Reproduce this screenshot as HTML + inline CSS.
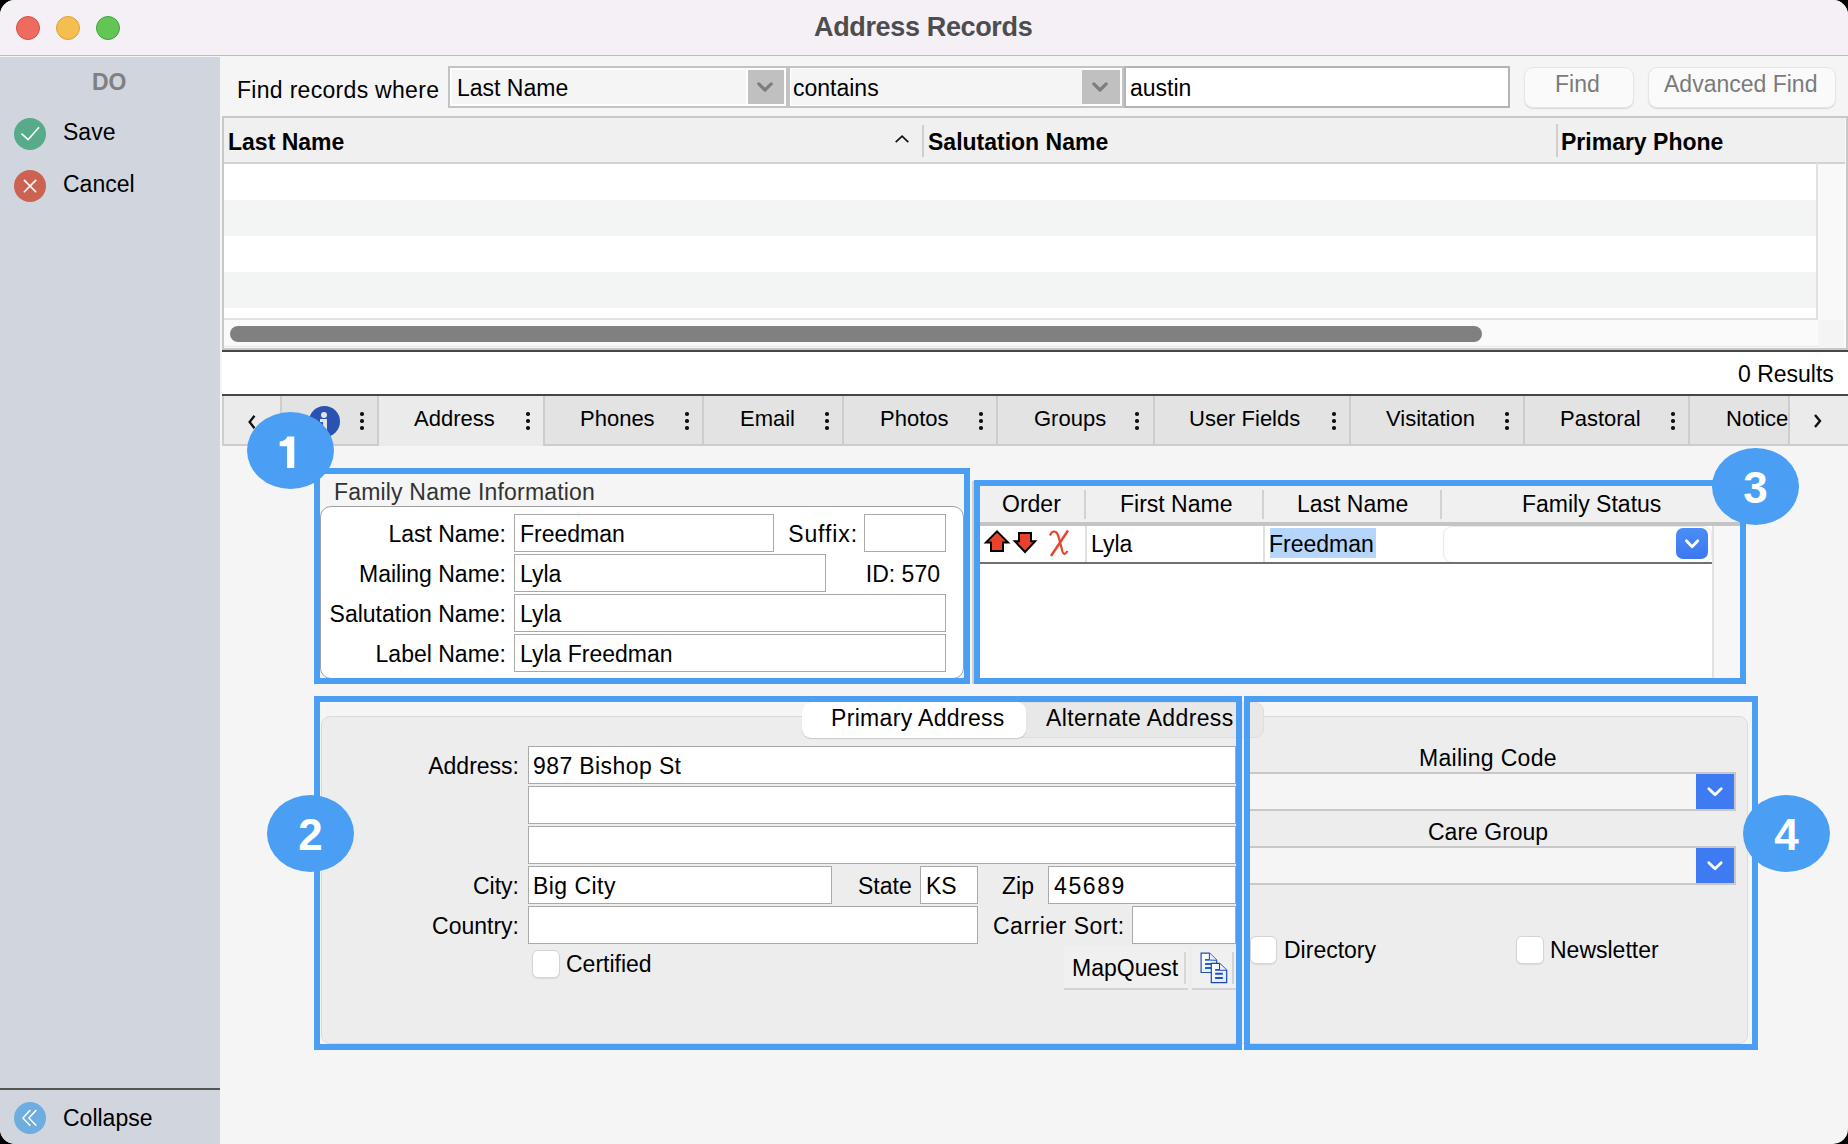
<!DOCTYPE html>
<html><head><meta charset="utf-8">
<style>
*{box-sizing:border-box;margin:0;padding:0}
html,body{width:1848px;height:1144px;overflow:hidden;background:#000}
body{font-family:"Liberation Sans",sans-serif;color:#000;position:relative}
.a{position:absolute}
.t{position:absolute;white-space:nowrap;font-size:23px;line-height:23px}
#win{position:absolute;left:0;top:0;width:1848px;height:1144px;border-radius:15px;overflow:hidden;background:#f5f5f5}
#title{position:absolute;left:0;top:0;width:1848px;height:56px;background:#f4f0f6;border-bottom:1px solid #b8bcc6}
.tl{position:absolute;top:16px;width:24px;height:24px;border-radius:50%}
#side{position:absolute;left:0;top:57px;width:220px;height:1087px;background:#d0d5de}
.ic{position:absolute;width:32px;height:32px;border-radius:50%}
.b1{border:2px solid #c4c4c4}
.fld{position:absolute;background:#fff;border:1px solid #a9a9a9}
.tab{position:absolute;top:396px;height:49px;background:#e3e3e3;border-right:2px solid #cfcfcf;border-bottom:2px solid #cfcfcf}
.tab .t{font-size:22px}
.dot{position:absolute;left:0.3px;width:3.5px;height:3.5px;border-radius:50%;background:#111}
.keb{position:absolute;top:13px;width:4px}
.keb i{display:block;width:4px;height:4px;background:#111;border-radius:50%;margin-bottom:5px}
.hl{position:absolute;border:6px solid #4a9ff5}
.badge{position:absolute;width:88px;height:78px;border-radius:50%;background:#4a9ff5;color:#fff;font-weight:bold;font-size:44px;line-height:80px;text-align:center}
</style></head><body>
<div id="win">
  <!-- title bar -->
  <div id="title">
    <div class="tl" style="left:16px;background:#ee6b60;border:1px solid #d64f45"></div>
    <div class="tl" style="left:56px;background:#f5bf4f;border:1px solid #d9a33c"></div>
    <div class="tl" style="left:96px;background:#62c554;border:1px solid #3fa436"></div>
    <div class="t" style="left:814px;top:14px;font-size:27px;line-height:27px;font-weight:bold;color:#4d4d50;letter-spacing:-0.35px">Address Records</div>
  </div>

  <!-- sidebar -->
  <div id="side">
    <div class="t" style="left:92px;top:14px;font-weight:bold;font-size:23px;color:#808080">DO</div>
    <div class="ic" style="left:14px;top:61px;background:#57ab8b">
      <svg width="32" height="32" viewBox="0 0 32 32" style="position:absolute;left:0;top:0"><path d="M7.5 15.6 L14.1 21.7 L25 9.3" fill="none" stroke="#fff" stroke-width="1.6"/></svg>
    </div>
    <div class="t" style="left:63px;top:64px">Save</div>
    <div class="ic" style="left:14px;top:113px;background:#cc6352">
      <svg width="32" height="32" viewBox="0 0 32 32" style="position:absolute;left:0;top:0"><path d="M9.9 9.9 L22.2 22.2 M22.2 9.9 L9.9 22.2" fill="none" stroke="#fff" stroke-width="1.6"/></svg>
    </div>
    <div class="t" style="left:63px;top:116px">Cancel</div>
    <div class="a" style="left:0;top:1031px;width:220px;height:2px;background:#555"></div>
    <div class="ic" style="left:14px;top:1045px;background:#6eaddf">
      <svg width="32" height="32" viewBox="0 0 32 32" style="position:absolute;left:0;top:0"><path d="M15.9 8.6 L8.9 15.9 L15.9 23.3 M21.9 8.6 L14.9 15.9 L21.9 23.3" fill="none" stroke="#fff" stroke-width="1.5" stroke-linecap="round"/></svg>
    </div>
    <div class="t" style="left:63px;top:1050px">Collapse</div>
  </div>

  <!-- main -->

  <!-- search bar -->
  <div class="t" style="left:237px;top:79px;letter-spacing:0.3px">Find records where</div>
  <div class="a" style="left:448px;top:66px;width:676px;height:42px;background:#c3c3c3"></div>
  <div class="a" style="left:450px;top:68px;width:336px;height:38px;background:#fdfdfd"></div>
  <div class="a" style="left:452px;top:70px;width:294px;height:34px;background:#f5f5f5"></div>
  <div class="a" style="left:748px;top:70px;width:36px;height:34px;background:#c0c0c0"></div>
  <svg class="a" style="left:748px;top:70px" width="36" height="34"><path d="M10.8 13.9 L17 20 L23.2 13.9" fill="none" stroke="#7d7d7d" stroke-width="3.2" stroke-linecap="round" stroke-linejoin="round"/></svg>
  <div class="t" style="left:457px;top:77px">Last Name</div>
  <div class="a" style="left:790px;top:68px;width:332px;height:38px;background:#fdfdfd"></div>
  <div class="a" style="left:791px;top:69px;width:291px;height:36px;background:#f5f5f5"></div>
  <div class="a" style="left:1082px;top:70px;width:38px;height:34px;background:#c0c0c0"></div>
  <svg class="a" style="left:1082px;top:70px" width="38" height="34"><path d="M11.8 13.9 L18 20 L24.2 13.9" fill="none" stroke="#7d7d7d" stroke-width="3.2" stroke-linecap="round" stroke-linejoin="round"/></svg>
  <div class="t" style="left:793px;top:77px">contains</div>
  <div class="a" style="left:1124px;top:66px;width:386px;height:42px;border:2px solid #b4b4b4;background:#fff"></div>
  <div class="t" style="left:1130px;top:77px">austin</div>
  <div class="a" style="left:1524px;top:67px;width:110px;height:41px;border-radius:9px;background:#fafafa;border:1px solid #e6e6e6;box-shadow:0 1px 1px rgba(0,0,0,0.12)"></div>
  <div class="t" style="left:1555px;top:73px;color:#7a7a7a">Find</div>
  <div class="a" style="left:1648px;top:67px;width:188px;height:41px;border-radius:9px;background:#fafafa;border:1px solid #e6e6e6;box-shadow:0 1px 1px rgba(0,0,0,0.12)"></div>
  <div class="t" style="left:1664px;top:73px;color:#7a7a7a">Advanced Find</div>

  <!-- results table -->
  <div class="a" style="left:222px;top:116px;width:1626px;height:234px;border:2px solid #c8c8c8;border-right:2px solid #c8c8c8;background:#fafafa"></div>
  <div class="a" style="left:224px;top:118px;width:1621px;height:46px;background:#f0f0f0;border-bottom:2px solid #d2d2d2"></div>
  <div class="t" style="left:228px;top:131px;font-weight:bold">Last Name</div>
  <svg class="a" style="left:892px;top:132px" width="20" height="14"><path d="M3.7 10.2 L10.1 4.1 L16.3 10.2" fill="none" stroke="#111" stroke-width="1.7"/></svg>
  <div class="a" style="left:922px;top:125px;width:2px;height:32px;background:#cfcfcf"></div>
  <div class="t" style="left:928px;top:131px;font-weight:bold">Salutation Name</div>
  <div class="a" style="left:1556px;top:124px;width:2px;height:33px;background:#cfcfcf"></div>
  <div class="t" style="left:1561px;top:131px;font-weight:bold">Primary Phone</div>
  <div class="a" style="left:224px;top:164px;width:1592px;height:36px;background:#fff"></div>
  <div class="a" style="left:224px;top:200px;width:1592px;height:36px;background:#f3f4f4"></div>
  <div class="a" style="left:224px;top:236px;width:1592px;height:36px;background:#fff"></div>
  <div class="a" style="left:224px;top:272px;width:1592px;height:36px;background:#f3f4f4"></div>
  <div class="a" style="left:224px;top:308px;width:1592px;height:10px;background:#fff"></div>
  <div class="a" style="left:224px;top:318px;width:1593px;height:2px;background:#e2e2e2"></div>
  <div class="a" style="left:1816px;top:163px;width:2px;height:157px;background:#e2e2e2"></div>
  <div class="a" style="left:1818px;top:164px;width:26px;height:156px;background:#f9f9f9"></div>
  <div class="a" style="left:1818px;top:320px;width:26px;height:28px;background:#f4f4f4"></div>
  <div class="a" style="left:224px;top:346px;width:1594px;height:1px;background:#e6e6e6"></div>
  <div class="a" style="left:230px;top:326px;width:1252px;height:16px;border-radius:8px;background:#808080"></div>
  <div class="a" style="left:222px;top:350px;width:1626px;height:2px;background:#474747"></div>

  <!-- results count -->
  <div class="a" style="left:222px;top:352px;width:1626px;height:42px;background:#fff"></div>
  <div class="t" style="left:1738px;top:363px">0 Results</div>
  <div class="a" style="left:222px;top:394px;width:1626px;height:2px;background:#474747"></div>

  <!-- tabs -->
  <div class="a" style="left:222px;top:396px;width:1626px;height:50px;background:#e3e3e3;border-bottom:2px solid #cdcdcd"></div>
  <div class="a" style="left:222px;top:396px;width:58px;height:50px;background:#ebebeb;border-left:2px solid #cdcdcd;border-bottom:2px solid #cdcdcd"></div>
  <div class="a" style="left:280px;top:396px;width:97px;height:50px;background:#e3e3e3;border-left:2px solid #cdcdcd;border-bottom:2px solid #cdcdcd"></div>
  <div class="a" style="left:377px;top:396px;width:166px;height:50px;background:#ebebeb;border-left:2px solid #cdcdcd;border-bottom:none"></div>
  <div class="a" style="left:543px;top:396px;width:159px;height:50px;background:#e3e3e3;border-left:2px solid #cdcdcd;border-bottom:2px solid #cdcdcd"></div>
  <div class="a" style="left:702px;top:396px;width:140px;height:50px;background:#e3e3e3;border-left:2px solid #cdcdcd;border-bottom:2px solid #cdcdcd"></div>
  <div class="a" style="left:842px;top:396px;width:154px;height:50px;background:#e3e3e3;border-left:2px solid #cdcdcd;border-bottom:2px solid #cdcdcd"></div>
  <div class="a" style="left:996px;top:396px;width:157px;height:50px;background:#e3e3e3;border-left:2px solid #cdcdcd;border-bottom:2px solid #cdcdcd"></div>
  <div class="a" style="left:1153px;top:396px;width:196px;height:50px;background:#e3e3e3;border-left:2px solid #cdcdcd;border-bottom:2px solid #cdcdcd"></div>
  <div class="a" style="left:1349px;top:396px;width:174px;height:50px;background:#e3e3e3;border-left:2px solid #cdcdcd;border-bottom:2px solid #cdcdcd"></div>
  <div class="a" style="left:1523px;top:396px;width:165px;height:50px;background:#e3e3e3;border-left:2px solid #cdcdcd;border-bottom:2px solid #cdcdcd"></div>
  <div class="a" style="left:1688px;top:396px;width:100px;height:50px;background:#e3e3e3;border-left:2px solid #cdcdcd;border-bottom:2px solid #cdcdcd"></div>
  <div class="a" style="left:1788px;top:396px;width:60px;height:50px;background:#ebebeb;border-left:2px solid #cdcdcd;border-bottom:2px solid #cdcdcd"></div>
  <div class="t" style="left:414px;top:408px;font-size:22px;line-height:22px">Address</div>
  <div class="t" style="left:580px;top:408px;font-size:22px;line-height:22px">Phones</div>
  <div class="t" style="left:740px;top:408px;font-size:22px;line-height:22px">Email</div>
  <div class="t" style="left:880px;top:408px;font-size:22px;line-height:22px">Photos</div>
  <div class="t" style="left:1034px;top:408px;font-size:22px;line-height:22px">Groups</div>
  <div class="t" style="left:1189px;top:408px;font-size:22px;line-height:22px">User Fields</div>
  <div class="t" style="left:1386px;top:408px;font-size:22px;line-height:22px">Visitation</div>
  <div class="t" style="left:1560px;top:408px;font-size:22px;line-height:22px">Pastoral</div>
  <div class="a" style="left:1689px;top:396px;width:100px;height:48px;overflow:hidden"><div class="t" style="left:37px;top:12px;font-size:22px;line-height:22px">Notice</div></div>
  <div class="a" style="left:360px;top:412px;width:4px;height:22px"><i class="dot" style="top:0"></i><i class="dot" style="top:7px"></i><i class="dot" style="top:14px"></i></div>
  <div class="a" style="left:526px;top:412px;width:4px;height:22px"><i class="dot" style="top:0"></i><i class="dot" style="top:7px"></i><i class="dot" style="top:14px"></i></div>
  <div class="a" style="left:685px;top:412px;width:4px;height:22px"><i class="dot" style="top:0"></i><i class="dot" style="top:7px"></i><i class="dot" style="top:14px"></i></div>
  <div class="a" style="left:825px;top:412px;width:4px;height:22px"><i class="dot" style="top:0"></i><i class="dot" style="top:7px"></i><i class="dot" style="top:14px"></i></div>
  <div class="a" style="left:979px;top:412px;width:4px;height:22px"><i class="dot" style="top:0"></i><i class="dot" style="top:7px"></i><i class="dot" style="top:14px"></i></div>
  <div class="a" style="left:1135px;top:412px;width:4px;height:22px"><i class="dot" style="top:0"></i><i class="dot" style="top:7px"></i><i class="dot" style="top:14px"></i></div>
  <div class="a" style="left:1332px;top:412px;width:4px;height:22px"><i class="dot" style="top:0"></i><i class="dot" style="top:7px"></i><i class="dot" style="top:14px"></i></div>
  <div class="a" style="left:1505px;top:412px;width:4px;height:22px"><i class="dot" style="top:0"></i><i class="dot" style="top:7px"></i><i class="dot" style="top:14px"></i></div>
  <div class="a" style="left:1671px;top:412px;width:4px;height:22px"><i class="dot" style="top:0"></i><i class="dot" style="top:7px"></i><i class="dot" style="top:14px"></i></div>
  <svg class="a" style="left:244px;top:410px" width="16" height="22"><path d="M10.5 5.8 L5.6 12 L10.5 18.2" fill="none" stroke="#111" stroke-width="2.3"/></svg>
  <svg class="a" style="left:1809px;top:410px" width="16" height="22"><path d="M6 5 L11 11 L6 17" fill="none" stroke="#111" stroke-width="2.4"/></svg>
  <div class="a" style="left:309px;top:406px;width:31px;height:31px;border-radius:50%;background:#2a52b0"></div>
  <div class="a" style="left:321px;top:412px;width:6px;height:6px;border-radius:50%;background:#e3e3e3"></div>
  <div class="a" style="left:323px;top:419px;width:4px;height:13px;background:#e3e3e3"></div>
  <div class="a" style="left:320px;top:419px;width:4px;height:3px;background:#e3e3e3"></div>

  <!-- box 1: family name info -->
  <div class="a" style="left:320px;top:474px;width:644px;height:204px;background:#f5f5f5"></div>
  <div class="t" style="left:334px;top:481px;color:#333;letter-spacing:0.18px">Family Name Information</div>
  <div class="a" style="left:320px;top:506px;width:644px;height:173px;background:#fff;border:1px solid #a0a0a0;border-radius:11px"></div>
  <div class="t" style="right:1342px;top:523px">Last Name:</div>
  <div class="t" style="right:1342px;top:563px">Mailing Name:</div>
  <div class="t" style="right:1342px;top:603px">Salutation Name:</div>
  <div class="t" style="right:1342px;top:643px">Label Name:</div>
  <div class="fld" style="left:514px;top:514px;width:260px;height:38px"></div>
  <div class="fld" style="left:514px;top:554px;width:312px;height:38px"></div>
  <div class="fld" style="left:514px;top:594px;width:432px;height:38px"></div>
  <div class="fld" style="left:514px;top:634px;width:432px;height:38px"></div>
  <div class="fld" style="left:864px;top:514px;width:82px;height:38px"></div>
  <div class="t" style="left:520px;top:523px">Freedman</div>
  <div class="t" style="left:520px;top:563px">Lyla</div>
  <div class="t" style="left:520px;top:603px">Lyla</div>
  <div class="t" style="left:520px;top:643px">Lyla Freedman</div>
  <div class="t" style="right:990px;top:523px;letter-spacing:0.9px">Suffix:</div>
  <div class="t" style="right:908px;top:563px">ID: 570</div>
  <div class="hl" style="left:314px;top:468px;width:656px;height:216px"></div>

  <!-- box 3: members table -->
  <div class="a" style="left:972px;top:481px;width:2px;height:203px;background:#cfcfcf"></div>
  <div class="a" style="left:980px;top:486px;width:760px;height:36px;background:#f0f0f0"></div>
  <div class="a" style="left:980px;top:522px;width:760px;height:4px;background:#c4c4c4"></div>
  <div class="a" style="left:980px;top:526px;width:732px;height:152px;background:#fff"></div>
  <div class="a" style="left:1712px;top:526px;width:28px;height:152px;background:#f7f7f7;border-left:2px solid #e2e2e2"></div>
  <div class="a" style="left:1084px;top:490px;width:2px;height:29px;background:#d2d2d2"></div>
  <div class="a" style="left:1262px;top:490px;width:2px;height:29px;background:#d2d2d2"></div>
  <div class="a" style="left:1440px;top:490px;width:2px;height:29px;background:#d2d2d2"></div>
  <div class="t" style="left:1002px;top:493px">Order</div>
  <div class="t" style="left:1120px;top:493px">First Name</div>
  <div class="t" style="left:1297px;top:493px">Last Name</div>
  <div class="t" style="left:1522px;top:493px">Family Status</div>
  <div class="a" style="left:1085px;top:526px;width:2px;height:36px;background:#e0e0e0"></div>
  <div class="a" style="left:1263px;top:526px;width:2px;height:36px;background:#e0e0e0"></div>
  <div class="a" style="left:1443px;top:526px;width:269px;height:37px;background:#fff;border:1px solid #e9e9e9;border-radius:9px"></div>
  <div class="a" style="left:980px;top:562px;width:732px;height:2px;background:#707070"></div>
  <div class="a" style="left:1270px;top:528px;width:106px;height:30px;background:#b5d5fb"></div>
  <div class="t" style="left:1091px;top:533px">Lyla</div>
  <div class="t" style="left:1269px;top:533px">Freedman</div>
  <div class="a" style="left:1676px;top:528px;width:32px;height:31px;border-radius:7px;background:linear-gradient(#4a8ef7,#3b77f0)"></div>
  <svg class="a" style="left:1676px;top:528px" width="32" height="31"><path d="M10.4 12.8 L16.1 18.7 L21.8 12.8" fill="none" stroke="#fff" stroke-width="2.8" stroke-linecap="round" stroke-linejoin="round"/></svg>
  <svg class="a" style="left:978px;top:524px" width="100" height="40">
    <path d="M19 6 L32.5 19.6 L26 19.6 L26 28 L12 28 L12 19.6 L5.5 19.6 Z" fill="#000"/><path d="M19 8.8 L27.8 17.6 L24 17.6 L24 26 L14 26 L14 17.6 L10.2 17.6 Z" fill="#e8432a"/>
    <path d="M40 8 L54 8 L54 16.2 L59.5 16.2 L47 29.6 L34.5 16.2 L40 16.2 Z" fill="#000"/><path d="M42 10 L52 10 L52 18.2 L54.8 18.2 L47 26.6 L39.2 18.2 L42 18.2 Z" fill="#e8432a"/>
  </svg>
  <svg class="a" style="left:1045px;top:526px" width="28" height="34">
    <path d="M5 9.5 Q7.5 3.5 11.5 6.5 Q13.5 9 15.5 18 L17.5 25.5 Q19 30.5 22.5 25" fill="none" stroke="#e8432a" stroke-width="2.2"/>
    <path d="M23 4.5 L6 30" fill="none" stroke="#e8432a" stroke-width="2.4"/>
  </svg>
  <div class="hl" style="left:974px;top:480px;width:772px;height:204px"></div>

  <!-- box 2 + 4 shared panel -->
  <div class="a" style="left:321px;top:716px;width:1427px;height:328px;background:#ededed;border:1px solid #dadada;border-radius:9px"></div>
  <div class="a" style="left:802px;top:702px;width:462px;height:36px;background:#e8e8e8;border:1px solid #dedede;border-radius:9px"></div>
  <div class="a" style="left:802px;top:702px;width:224px;height:36px;background:#fff;border-radius:9px;box-shadow:0 1px 1px rgba(0,0,0,0.15)"></div>
  <div class="t" style="left:831px;top:707px;letter-spacing:0.33px">Primary Address</div>
  <div class="t" style="left:1046px;top:707px;letter-spacing:0.35px">Alternate Address</div>

  <div class="t" style="right:1329px;top:755px">Address:</div>
  <div class="fld" style="left:528px;top:746px;width:708px;height:38px"></div>
  <div class="fld" style="left:528px;top:786px;width:708px;height:38px"></div>
  <div class="fld" style="left:528px;top:826px;width:708px;height:38px"></div>
  <div class="t" style="left:533px;top:755px;letter-spacing:0.4px">987 Bishop St</div>
  <div class="t" style="right:1329px;top:875px">City:</div>
  <div class="fld" style="left:528px;top:866px;width:304px;height:38px"></div>
  <div class="t" style="left:533px;top:875px;letter-spacing:0.45px">Big City</div>
  <div class="t" style="left:858px;top:875px">State</div>
  <div class="fld" style="left:920px;top:866px;width:58px;height:38px"></div>
  <div class="t" style="left:926px;top:875px">KS</div>
  <div class="t" style="left:1002px;top:875px">Zip</div>
  <div class="fld" style="left:1048px;top:866px;width:188px;height:38px"></div>
  <div class="t" style="left:1054px;top:875px;letter-spacing:1.6px">45689</div>
  <div class="t" style="right:1329px;top:915px">Country:</div>
  <div class="fld" style="left:528px;top:906px;width:450px;height:38px"></div>
  <div class="t" style="left:993px;top:915px;letter-spacing:0.5px">Carrier Sort:</div>
  <div class="fld" style="left:1132px;top:906px;width:104px;height:38px"></div>
  <div class="a" style="left:532px;top:950px;width:28px;height:28px;background:#fff;border:1px solid #d4d4d4;border-radius:6px;box-shadow:0 1px 1px rgba(0,0,0,0.08)"></div>
  <div class="t" style="left:566px;top:953px">Certified</div>
  <div class="a" style="left:1064px;top:946px;width:124px;height:42px;background:#f0f0f0"></div>
  <div class="a" style="left:1192px;top:946px;width:44px;height:42px;background:#f0f0f0"></div>
  <div class="a" style="left:1064px;top:988px;width:124px;height:2px;background:#d3d3d3"></div>
  <div class="a" style="left:1192px;top:988px;width:44px;height:2px;background:#d3d3d3"></div>
  <div class="a" style="left:1184px;top:952px;width:2px;height:32px;background:#d6d6d6"></div>
  <div class="a" style="left:1232px;top:952px;width:2px;height:32px;background:#d3d3d3"></div>
  <div class="t" style="left:1072px;top:957px">MapQuest</div>
  <svg class="a" style="left:1198px;top:950px" width="32" height="36">
    <defs><linearGradient id="pg" x1="0" y1="0" x2="1" y2="1"><stop offset="0" stop-color="#ffffff"/><stop offset="1" stop-color="#dce8fa"/></linearGradient></defs>
    <path d="M3.1 3.1 L11.4 3.1 L18.7 10.3 L18.7 22.5 L3.1 22.5 Z" fill="url(#pg)" stroke="#1f4fb5" stroke-width="1.2"/>
    <path d="M11.4 3.1 L11.4 10.1 L18.7 10.3" fill="#e6eefb" stroke="#1f4fb5" stroke-width="1"/>
    <path d="M7 9.9 L11.2 9.9 M7 14 L13.5 14 M7 18 L13.5 18" stroke="#2563c8" stroke-width="1.9"/>
    <path d="M13.3 13.4 L21.5 13.4 L28.7 20.3 L28.7 32.6 L13.3 32.6 Z" fill="url(#pg)" stroke="#1d47ad" stroke-width="1.2"/>
    <path d="M21.5 13.4 L21.5 20.3 L28.7 20.3" fill="#e6eefb" stroke="#1d47ad" stroke-width="1"/>
    <path d="M17.1 19.9 L21.5 19.9 M17.1 23.8 L24.8 23.8 M17.1 28 L24.8 28" stroke="#1f52bd" stroke-width="1.9"/>
  </svg>
  <div class="hl" style="left:314px;top:696px;width:928px;height:354px"></div>

  <!-- box 4 -->
  <div class="t" style="left:1419px;top:747px;letter-spacing:0.3px">Mailing Code</div>
  <div class="a" style="left:1250px;top:772px;width:486px;height:39px;background:#f5f5f5;border:2px solid #c8c8c8;border-left:none"></div>
  <div class="a" style="left:1696px;top:774px;width:38px;height:35px;background:#3e7bf2"></div>
  <svg class="a" style="left:1696px;top:774px" width="38" height="35"><path d="M12.8 14.8 L19 20.7 L25.2 14.8" fill="none" stroke="#fff" stroke-width="2.8" stroke-linecap="round" stroke-linejoin="round"/></svg>
  <div class="t" style="left:1428px;top:821px">Care Group</div>
  <div class="a" style="left:1250px;top:846px;width:486px;height:39px;background:#f5f5f5;border:2px solid #c8c8c8;border-left:none"></div>
  <div class="a" style="left:1696px;top:848px;width:38px;height:35px;background:#3e7bf2"></div>
  <svg class="a" style="left:1696px;top:848px" width="38" height="35"><path d="M12.8 14.8 L19 20.7 L25.2 14.8" fill="none" stroke="#fff" stroke-width="2.8" stroke-linecap="round" stroke-linejoin="round"/></svg>
  <div class="a" style="left:1250px;top:936px;width:27px;height:28px;background:#fff;border:1px solid #d4d4d4;border-radius:6px;box-shadow:0 1px 1px rgba(0,0,0,0.08)"></div>
  <div class="t" style="left:1284px;top:939px">Directory</div>
  <div class="a" style="left:1516px;top:936px;width:28px;height:28px;background:#fff;border:1px solid #d4d4d4;border-radius:6px;box-shadow:0 1px 1px rgba(0,0,0,0.08)"></div>
  <div class="t" style="left:1550px;top:939px">Newsletter</div>
  <div class="hl" style="left:1244px;top:696px;width:514px;height:354px"></div>

  <!-- badges -->
  <div class="badge" style="left:247px;top:412px;width:87px;height:77px"></div>
  <svg class="a" style="left:247px;top:412px" width="87" height="77"><path d="M32.7 29.6 C36.5 29.2 39.3 27.6 40.3 24.5 L47.3 24.5 L47.3 56 L40.1 56 L40.1 34.2 L32.7 34.2 Z" fill="#fff"/></svg>
  <div class="badge" style="left:267px;top:795px;width:87px;height:77px">2</div>
  <div class="badge" style="left:1712px;top:448px;width:87px;height:77px">3</div>
  <div class="badge" style="left:1743px;top:795px;width:87px;height:77px">4</div>
</div>
</body></html>
